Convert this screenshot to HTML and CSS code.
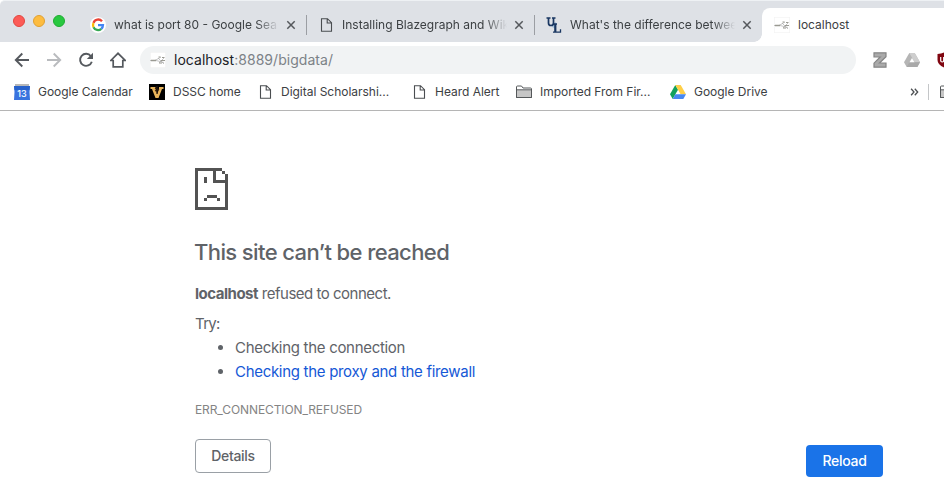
FILE: index.html
```
<!DOCTYPE html>
<html lang="en">
<head>
<meta charset="utf-8">
<title>localhost</title>
<link rel="stylesheet" href="styles.css">
</head>
<body>
<svg class="defs" width="0" height="0">
  <symbol id="page" viewBox="0 0 16 16"><path d="M3.500 1.700h6l4 4v8.600h-10zM9.200 1.700v4.300h4.300" fill="none" stroke="#4a4d50" stroke-width="1.100"/></symbol>
  <symbol id="close" viewBox="0 0 10 10"><path d="M1.300 1.300l7.400 7.400M8.700 1.300L1.300 8.700" stroke="#55585c" stroke-width="1.500"/></symbol>
  <symbol id="graph" viewBox="0 0 16 16"><path fill="#fff" stroke="#e9e9e9" stroke-width=".5" d="M.25.25h15.500v15.500H.25z"/><path d="M0 8.500h6M5 8.500l6-3.500M6 8.500l8 2M9 11l5-5M8 6l6 6" stroke="#aaa" stroke-width=".7"/><path d="M1 7.700h5v1.600H1zM8.500 4.500h2v1h-2zM12 5h2.500v1H12zM9 10.500h3v1H9zM11 8h4v1h-4z" fill="#9a9a92"/></symbol>
  <symbol id="folder" viewBox="0 0 16 14"><path d="M.5 12.500V2q0-1 1-1h4l1.500 2h7.500q1 0 1 1v8.500z" fill="#fff" stroke="#55585a"/><path d="M1 5h14v7H1z" fill="#c6c6c6"/><path d="M.5 4.800h15v7.700H.5z" fill="none" stroke="#55585a"/></symbol>
</svg>
<header>
  <div class="tabs">
    <div class="lights"><i class="red"></i><i class="amber"></i><i class="green"></i></div>
    <div class="tab t1">
      <svg class="fav" viewBox="0 0 16 16"><circle cx="8" cy="8" r="8" fill="#fff"/><g fill="none" stroke-width="2.300"><path d="M12 4.200A5 5 0 0 0 3.500 5.900" stroke="#ea4335"/><path d="M3.500 5.900a5 5 0 0 0 0 4.300" stroke="#fbbc05"/><path d="M3.500 10.200A5 5 0 0 0 11.300 11.800" stroke="#34a853"/><path d="M11.300 11.800Q13 10.300 13 8.100H8" stroke="#4285f4"/></g></svg>
      <span class="title">what is port 80 - Google Sea</span><svg class="x"><use href="#close"/></svg>
    </div>
    <div class="tab t2">
      <svg class="fav"><use href="#page"/></svg>
      <span class="title">Installing Blazegraph and Wik</span><svg class="x"><use href="#close"/></svg>
    </div>
    <div class="tab t3">
      <svg class="fav" viewBox="0 0 16 16"><path d="M6 7l4-2v7l-4-2z" fill="#a9c5df"/><g fill="none" stroke="#193661"><path d="M.5 1h4M6 1h3.500M7 15.200h7.500v-3M7 7h4" stroke-width="1.300"/><path d="M2.500 1v5q0 2.500 2.400 2.500Q7.500 8.500 7.500 6V1" stroke-width="1.700"/><path d="M9.300 7v8" stroke-width="2.200"/></g></svg>
      <span class="title">What's the difference betwee</span><svg class="x"><use href="#close"/></svg>
    </div>
    <div class="tab active"><svg class="fav"><use href="#graph"/></svg><span class="title">localhost</span></div>
  </div>
  <div class="toolbar">
    <svg class="nav" viewBox="0 0 16 16"><path d="M15 8H2M8.300 1.500L1.800 8l6.500 6.500" fill="none" stroke="#55595e" stroke-width="1.900"/></svg>
    <svg class="nav" viewBox="0 0 16 16"><path d="M1 8h13M7.700 1.500L14.200 8l-6.500 6.500" fill="none" stroke="#b9bbbe" stroke-width="1.900"/></svg>
    <svg class="nav" viewBox="0 0 16 16"><path d="M12.900 4.200A6 6 0 1 0 13.800 9.700" fill="none" stroke="#55595e" stroke-width="1.900"/><path d="M15 .8v6.200H8.800z" fill="#55595e"/></svg>
    <svg class="nav" viewBox="0 0 16 16"><path d="M.8 8.500L8 1.300l7.200 7.200h-2.400v6.300H3.200V8.500z" fill="none" stroke="#55595e" stroke-width="1.700"/></svg>
    <div class="omnibox"><svg class="fav"><use href="#graph"/></svg><span class="url"><b>localhost</b>:8889/bigdata/</span></div>
    <div class="extensions">
      <svg width="14" height="16" viewBox="0 0 14 16"><path d="M1 .8h12v4L6.500 11H13v4.200H1v-4L7.200 5H1z" fill="#aaa" stroke="#858585" stroke-width="1.200"/></svg>
      <svg width="16" height="14" viewBox="0 0 16 14"><path d="M5.300 0h5.400L16 9.300 13.300 14H2.700L0 9.300z" fill="#b5b5b5"/><path d="M5.300 0h5.400L16 9.300h-5.300z" fill="#cecece"/><path d="M5.300 9.300H16L13.300 14H2.700z" fill="#a9a9a9"/><path d="M8 5l2.500 4.300h-5z" fill="#fff"/></svg>
      <svg width="16" height="16" viewBox="0 0 16 16"><path d="M8 0q3 2 7.500 2v6q0 5-7.500 8Q.5 13 .5 8V2Q5 2 8 0z" fill="#800610"/><path d="M3.700 5v3.500q0 1.500 1.500 1.500t1.500-1.500V5" fill="none" stroke="#fff" stroke-width="1.200"/></svg>
    </div>
  </div>
  <nav class="bookmarks">
    <a class="b1"><svg class="fav" viewBox="0 0 16 16"><path d="M1 0h14v3H1z" fill="#b8b8b8"/><path d="M0 2h16l-.5 6 .5 8H0l.5-8z" fill="#3974df"/><path d="M0 2h16l-.5 4H.5z" fill="#2862cb"/><text x="8" y="13" text-anchor="middle" class="day">13</text></svg><span>Google Calendar</span></a>
    <a class="b2"><svg class="fav" viewBox="0 0 16 16"><path d="M0 0h16v16H0z"/><path d="M1.500 3h5v2l1.800 5L10 5V3h4.500v2H13l-3.500 9h-3L3 5H1.500z" fill="#e8b45b"/><path d="M8 2v8M6 4l4 2M6 7l4-2" stroke="#2c1a0c" stroke-width="1.200"/></svg><span>DSSC home</span></a>
    <a class="b3"><svg class="fav"><use href="#page"/></svg><span>Digital Scholarshi...</span></a>
    <a class="b4"><svg class="fav"><use href="#page"/></svg><span>Heard Alert</span></a>
    <a class="b5"><svg class="fold"><use href="#folder"/></svg><span>Imported From Fir...</span></a>
    <a class="b6"><svg class="drive" viewBox="0 0 16 14"><path d="M5.300 0L8 4.700 2.700 14 0 9.300z" fill="#11a15d"/><path d="M5.300 0h5.400L16 9.300h-5.400z" fill="#ffcf47"/><path d="M5.400 9.300H16L13.300 14H2.700z" fill="#4688f1"/></svg><span>Google Drive</span></a>
    <svg class="more" viewBox="0 0 8 8"><path d="M.6 .8L3.500 4 .6 7.200M4.300 .8L7.200 4 4.300 7.200" fill="none" stroke="#4c4f52" stroke-width="1.300"/></svg>
    <i class="rule"></i>
    <svg class="fold last"><use href="#folder"/></svg>
  </nav>
</header>
<main>
  <svg class="sad" width="33" height="42" viewBox="0 0 11 14" shape-rendering="crispEdges"><path fill="#535353" d="M0 0h9v1h1v1h1v12H0zM1 1v12h9V5H6V1zM7 1v3h3V2H9V1zM3 3h1v2H3zM4 9h3.400v1h1v1h-1v-1H4v1H3v-1h1z"/></svg>
  <h1>This site can’t be reached</h1>
  <p class="summary"><strong>localhost</strong> refused to connect.</p>
  <p class="try">Try:</p>
  <ul><li>Checking the connection</li><li><a class="link">Checking the proxy and the firewall</a></li></ul>
  <p class="code">ERR_CONNECTION_REFUSED</p>
  <div class="actions"><button class="details">Details</button><button class="reload">Reload</button></div>
</main>
</body>
</html>
```
FILE: styles.css
```
* { box-sizing: border-box; }
body { margin: 0; width: 944px; height: 487px; overflow: hidden; background: #fff; font-family: Inter, "Liberation Sans", sans-serif; color: #5f6368; }
.defs { position: absolute; }
svg { display: block; flex: none; }
header { height: 111px; border-bottom: 1px solid #b5b5b5; color: #3c4043; font-size: 12px; overflow: hidden; }
.tabs { display: flex; height: 42px; padding-left: 13px; background: #dee1e6; border-top: 1px solid #eef1f4; border-top-left-radius: 5px; }
.lights { display: flex; gap: 8px; width: 77px; padding-top: 14px; }
.lights i { width: 12px; height: 12px; border-radius: 50%; border: 1px solid; }
.lights .red { background: #fc5b57; border-color: #e2463f; }
.lights .amber { background: #fdbc40; border-color: #e0a032; }
.lights .green { background: #28c840; border-color: #1fac31; }
.fav { width: 16px; height: 16px; }
.tab { display: flex; align-items: center; height: 33px; margin-top: 7px; }
.tab .title { width: 165px; margin-left: 8px; white-space: nowrap; line-height: 18px; -webkit-mask-image: linear-gradient(90deg, #000 143px, transparent 165px); mask-image: linear-gradient(90deg, #000 143px, transparent 165px); }
.tab .x { width: 10px; height: 10px; margin-left: 7px; }
.t1::after, .t2::after { content: ""; width: 1px; height: 20px; background: #9b9ea3; margin-left: 10px; }
.t2 { padding-left: 11px; }
.t3 { padding-left: 11px; width: 227px; }
.tab.active { position: relative; flex: 1; height: 34px; padding: 0 0 1px 12px; background: #fff; border-top-left-radius: 8px; }
.tab.active::before { content: ""; position: absolute; left: -8px; bottom: 0; width: 8px; height: 8px; background: radial-gradient(circle at 0 0, transparent 7.5px, #fff 8px); }
.tab.active .title { width: auto; mask-image: none; -webkit-mask-image: none; }
.toolbar { display: flex; align-items: center; height: 36px; padding-left: 14px; }
.nav { width: 16px; height: 16px; margin-right: 16px; }
.omnibox { display: flex; flex: none; align-items: center; width: 716px; height: 28px; margin-left: -2px; padding-left: 10px; border-radius: 14px; background: #f1f3f4; font-size: 14px; }
.url { margin-left: 8px; padding-bottom: 2px; color: #7c8287; letter-spacing: .04px; }
.url b { font-weight: 400; color: #202124; }
.extensions { display: flex; align-items: center; gap: 17px; margin-left: 17px; }
.bookmarks { display: flex; align-items: center; height: 28px; padding-left: 14px; }
.bookmarks a { display: flex; align-items: center; gap: 8px; white-space: nowrap; height: 18px; flex: none; }
.bookmarks span { padding-bottom: 2px; letter-spacing: -.02px; }
.b1 { width: 135px; }
.b2 { width: 108px; }
.b3 { width: 154px; }
.b4 { width: 105px; }
.b5 { width: 154px; }
.b6 { width: 240px; }
.day { font-size: 9px; font-weight: 500; fill: #fff; }
.fold, .drive { width: 16px; height: 14px; }
.more { width: 9px; height: 8px; }
.rule { flex: none; width: 1px; height: 16px; margin: 0 11px 0 9px; background: #c4c6c8; }
main { width: 688px; margin-left: 195px; padding-top: 57px; font-size: 15px; line-height: 24px; letter-spacing: -.3px; }
h1 { margin: 28px 0 0 -1px; font-size: 22px; line-height: 28px; font-weight: 500; letter-spacing: -.6px; }
p, ul { margin: 0; }
.summary { margin-top: 16px; letter-spacing: -.49px; }
.try { margin-top: 6px; letter-spacing: -.7px; }
ul { padding-left: 40px; }
.link { color: #1558d6; }
.code { margin-top: 14px; font-size: 12px; color: #848484; letter-spacing: -.1px; }
.actions { display: flex; justify-content: space-between; margin-top: 17px; }
button { font: 500 14px/20px Inter, sans-serif; letter-spacing: -.3px; border-radius: 4px; padding: 0; }
.details { width: 76px; height: 34px; color: #5f6368; background: #fff; border: 1px solid #9aa0a6; }
.reload { width: 77px; height: 32px; margin-top: 6px; color: #fff; background: #1a73e8; border: 0; }
```
